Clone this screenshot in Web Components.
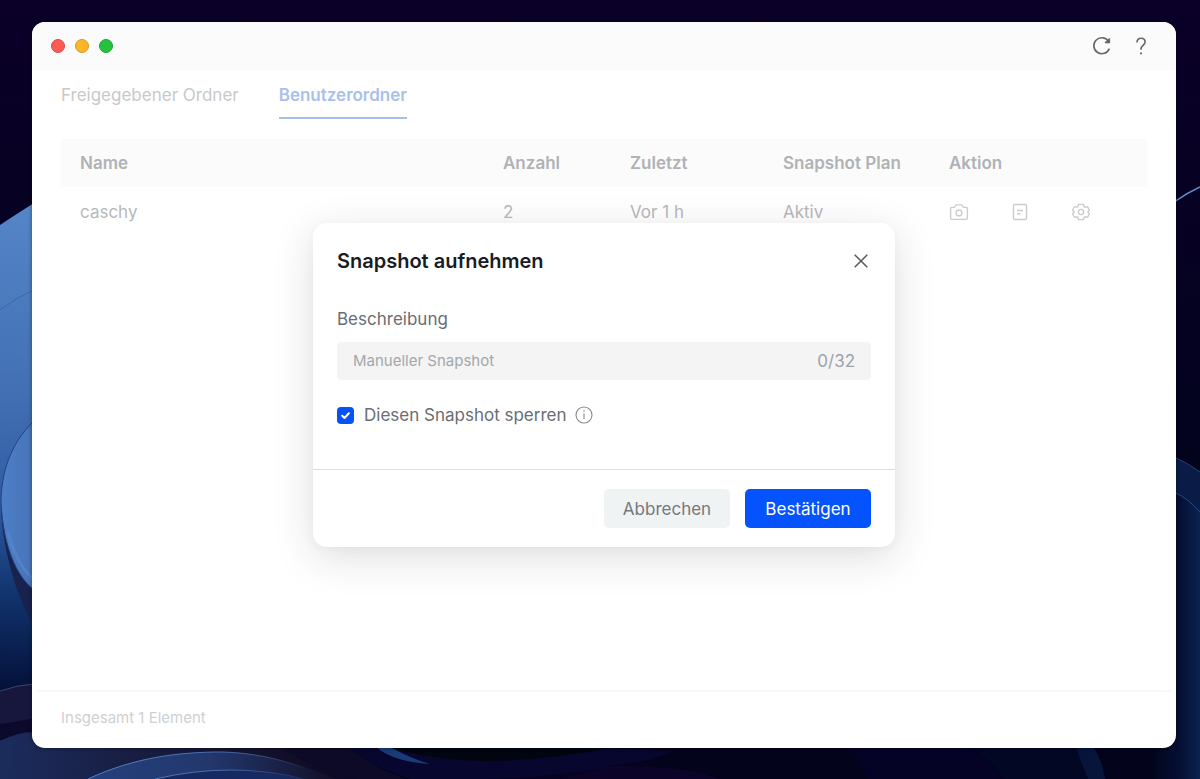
<!DOCTYPE html>
<html lang="de">
<head>
<meta charset="utf-8">
<meta name="viewport" content="width=device-width, initial-scale=1">
<title>Snapshot</title>
<style>
  html, body { margin: 0; background: #080022; }
  body { font-family: Inter, "Liberation Sans", sans-serif; font-size: 17px; line-height: 24px; color: #6a6d72; }
</style>
</head>
<body>
<snap-desktop>
  <app-window>
    <tab-bar slot="tabs"></tab-bar>
    <folder-table></folder-table>
    <span slot="status">Insgesamt 1 Element</span>
    <snapshot-dialog slot="overlay" heading="Snapshot aufnehmen"></snapshot-dialog>
  </app-window>
</snap-desktop>
<script>
const define = (name, html, setup) => customElements.define(name, class extends HTMLElement {
  connectedCallback() {
    if (this.shadowRoot) return;
    const root = this.attachShadow({ mode: 'open' });
    root.innerHTML = html;
    if (setup) setup(root, this);
  }
});

const icons = {
  refresh: '<path d="M18.4 7.200A8 8 0 1 0 19.300 14.600"/><path d="M19.300 4.300v4.100h-4.400"/><path d="M16.600 8.200l2.500-2.300v2.500z" fill="currentColor"/>',
  help: '<path d="M8 8.400c0-2.600 1.700-4.200 4-4.200s4.100 1.500 4.100 3.800c0 3.300-4.100 3.500-4.100 6.900v.8"/><path d="M12 18.400v1.900" stroke-width="1.900"/>',
  camera: '<path d="M4.700 7.400h2.800l1.700-2.500h5.600l1.700 2.500h2.800c.6 0 1.100.5 1.100 1.100v9.800c0 .6-.5 1.100-1.100 1.100H4.700c-.6 0-1.100-.5-1.100-1.100V8.500c0-.6.5-1.100 1.100-1.100z"/><circle cx="12" cy="12.900" r="2.900"/>',
  note: '<rect x="5.500" y="4.500" width="13" height="15" rx="1.400"/><path d="M9 10.500h6M9 13.700h3.500"/>',
  gear: '<path d="M9.800 4.400h4.400l1.300 2.700 3.200-.1 1.700 3-1.600 2 1.600 2-1.700 3-3.200-.1-1.300 2.700H9.800l-1.300-2.700-3.200.1-1.700-3 1.600-2-1.600-2 1.700-3 3.200.1z"/><circle cx="12" cy="12" r="2.600"/>',
  close: '<path d="M5.700 5.700l12.600 12.600M18.300 5.700L5.700 18.300"/>',
  info: '<circle cx="12" cy="12" r="8"/><path d="M12 10.300v6M12 7.300v1.400"/>'
};
define('ui-icon', `
<style>
  :host { display: inline-block; width: 24px; height: 24px; }
  svg { display: block; width: 100%; height: 100%; fill: none; stroke: currentColor; stroke-width: var(--stroke, 1.4); stroke-linejoin: round; }
</style>
<svg viewBox="0 0 24 24" aria-hidden="true"></svg>`, (root, host) => {
  root.querySelector('svg').innerHTML = icons[host.getAttribute('name')];
});

define('snap-desktop', `
<style>
  :host { display: flex; position: relative; isolation: isolate; box-sizing: border-box; min-height: 100vh; padding: 22px 24px 31px 32px; overflow: hidden; }
  .wallpaper { position: absolute; inset: 0; z-index: -1; width: 100%; height: 100%; }
  ::slotted(*) { flex: 1; min-width: 0; }
</style>
<svg class="wallpaper" viewBox="0 0 1200 779" preserveAspectRatio="none" aria-hidden="true">
  <defs>
    <linearGradient id="petal" x1="4" y1="200" x2="0" y2="690" gradientUnits="userSpaceOnUse">
      <stop offset="0" stop-color="#5586c8"/><stop offset=".4" stop-color="#426fb4"/><stop offset=".62" stop-color="#2f5ba2"/><stop offset=".8" stop-color="#12346e"/><stop offset="1" stop-color="#04113a"/>
    </linearGradient>
    <linearGradient id="disc" x1="0" y1="0" x2="34" y2="0" gradientUnits="userSpaceOnUse">
      <stop offset="0" stop-color="#4d7fc8"/><stop offset="1" stop-color="#4773b8"/>
    </linearGradient>
    <linearGradient id="right" x1="1155" y1="0" x2="1204" y2="0" gradientUnits="userSpaceOnUse">
      <stop offset="0" stop-color="#020720"/><stop offset=".5" stop-color="#050f33"/><stop offset="1" stop-color="#0c2658"/>
    </linearGradient>
    <linearGradient id="night" x1="0" y1="0" x2="0" y2="1"><stop offset="0" stop-color="#0b0028"/><stop offset=".55" stop-color="#03031f"/><stop offset="1" stop-color="#03031c"/></linearGradient>
    <linearGradient id="fold" x1="0" y1="0" x2="400" y2="0" gradientUnits="userSpaceOnUse">
      <stop offset="0" stop-color="#1b2c5c"/><stop offset=".35" stop-color="#181d40"/><stop offset=".7" stop-color="#121029"/><stop offset="1" stop-color="#06041f"/>
    </linearGradient>
    <linearGradient id="band" x1="90" y1="0" x2="330" y2="0" gradientUnits="userSpaceOnUse">
      <stop offset="0" stop-color="#24407c"/><stop offset=".5" stop-color="#23376d"/><stop offset="1" stop-color="#121029"/>
    </linearGradient>
    <linearGradient id="rim" x1="90" y1="0" x2="310" y2="0" gradientUnits="userSpaceOnUse">
      <stop offset="0" stop-color="#5580c0"/><stop offset=".6" stop-color="#456eaf"/><stop offset="1" stop-color="#456eaf" stop-opacity="0"/>
    </linearGradient>
  </defs>
  <rect width="1200" height="779" fill="url(#night)"/>
  <path d="M0 225Q18 213 34 203V690H0z" fill="url(#petal)"/>
  <path d="M0 310Q17 297 34 290" fill="none" stroke="#3867ac"/>
  <path d="M1 505C2 550 18 600 34 626V585C16 570 4 540 2 505z" fill="#17224f"/>
  <path d="M34 421C10 443 1 475 1 502C3 545 16 576 34 590z" fill="url(#disc)" stroke="#21437f"/>
  <path d="M8 532C14 556 24 571 34 580" fill="none" stroke="#5b8cd0" stroke-opacity=".5" stroke-width="3"/>
  <path d="M0 691Q17 685 34 684V779H0z" fill="#17173e"/>
  <path d="M0 691Q17 685 34 684" fill="none" stroke="#36466e"/>
  <path d="M0 724Q17 722 34 718V740H0z" fill="#0b0a2c"/>
  <path d="M0 741Q18 732 34 732L60 746H400V779H0z" fill="url(#fold)"/>
  <path d="M88 779C135 757 180 752 222 752C270 753 305 766 335 779z" fill="url(#band)"/>
  <path d="M88 779C135 757 180 752 222 752C260 753 290 762 310 771" fill="none" stroke="url(#rim)"/>
  <path d="M155 779Q232 761 305 779z" fill="#162960"/>
  <path d="M155 779Q232 761 305 779" fill="none" stroke="url(#rim)"/>
  <path d="M282 748Q310 768 355 779H405Q375 768 350 748z" fill="#0c0a26"/>
  <path d="M350 748Q370 765 410 779H700L800 748z" fill="#05031e"/>
  <path d="M350 748H600L690 752Q570 779 480 779H410Q370 765 350 748z" fill="#07062e"/>
  <path d="M377 748Q395 762 430 764Q410 758 392 748z" fill="#1a3b78"/>
  <path d="M392 748Q440 762 500 761Q560 758 610 748z" fill="#020410"/>
  <path d="M600 769Q655 754 720 779H560z" fill="#0b0428"/>
  <path d="M680 748H970Q992 760 1004 779H720Q690 765 600 766Q650 764 680 748z" fill="#04031c"/>
  <path d="M850 748H970Q992 760 1004 779H870z" fill="#06042a" fill-opacity=".7"/>
  <path d="M970 748Q992 760 1004 779H1105Q1103 762 1094 748z" fill="#020724"/>
  <path d="M1076 748H1094Q1103 762 1105 779H1088z" fill="#0a1b46" fill-opacity=".7"/>
  <path d="M1174 202Q1187 193 1200 187" fill="none" stroke="#6190d2" stroke-width="1.500"/>
  <path d="M1174 457Q1188 463 1200 472V520H1174z" fill="#0a1b46"/>
  <path d="M1174 457Q1188 463 1200 472" fill="none" stroke="#203f7b"/>
  <path d="M1174 492Q1189 499 1200 512V779H1155V735H1174z" fill="url(#right)"/>
  <path d="M1174 492Q1189 499 1200 512" fill="none" stroke="#234884"/>
</svg>
<slot></slot>`);

define('app-window', `
<style>
  :host { display: flex; flex-direction: column; position: relative; overflow: hidden; border-radius: 13px; background: #fff; box-shadow: 0 0 4px #0006; }
  header { display: flex; align-items: center; gap: 13px; height: 48px; padding: 0 22px 0 19px; background: #fbfbfc; }
  .lights { display: flex; gap: 10px; margin-right: auto; }
  .lights button { width: 14px; height: 14px; padding: 0; border: 1px solid #d84b43; border-radius: 50%; background: #fc5b54; }
  .lights .min { border-color: #d89a26; background: #fbb62a; }
  .lights .max { border-color: #1fa534; background: #25c23e; }
  .tool { display: grid; width: 26px; padding: 0; border: 0; background: none; color: #66676a; place-items: center; --stroke: 1.6; }
  main { flex: 1; padding: 0 29px; }
  footer { margin: 0 4px; padding: 14px 25px 18px; border-top: 2px solid #f8f8f9; color: #cfd0d2; font-size: 15px; }
  ::slotted([slot=overlay]) { position: absolute; inset: 0; }
</style>
<header>
  <div class="lights">
    <button aria-label="Schließen"></button><button class="min" aria-label="Minimieren"></button><button class="max" aria-label="Maximieren"></button>
  </div>
  <button class="tool" aria-label="Aktualisieren"><ui-icon name="refresh"></ui-icon></button>
  <button class="tool" aria-label="Hilfe"><ui-icon name="help"></ui-icon></button>
</header>
<main><slot name="tabs"></slot><slot></slot></main>
<footer><slot name="status"></slot></footer>
<slot name="overlay"></slot>`);

define('tab-bar', `
<style>
  :host { display: block; margin-bottom: 20px; }
  div { display: flex; gap: 40px; }
  button { padding: 13px 0 10px; border: 0; border-bottom: 2px solid transparent; background: none; color: #c8c9ca; font: inherit; }
  [aria-selected=true] { border-color: #a9bfea; color: #a9c0ee; font-weight: 600; }
</style>
<div role="tablist">
  <button role="tab" aria-selected="false">Freigegebener Ordner</button>
  <button role="tab" aria-selected="true">Benutzerordner</button>
</div>`);

define('folder-table', `
<style>
  :host { display: block; }
  table { width: 100%; table-layout: fixed; border-collapse: collapse; color: #b7b8ba; }
  th, td { padding: 12px 0 12px 19px; text-align: left; white-space: nowrap; }
  th { background: #fbfbfc; color: #b0b2b4; font-weight: 600; }
  td { padding-top: 13px; }
  .count { width: 108px; } .last { width: 134px; } .plan { width: 147px; } .action { width: 198px; }
  td.tools { padding-left: 17px; }
  .actions { display: flex; gap: 37px; }
  .actions button { width: 24px; height: 24px; padding: 0; border: 0; background: none; color: #cbccce; }
</style>
<table>
  <thead><tr><th>Name</th><th class="count">Anzahl</th><th class="last">Zuletzt</th><th class="plan">Snapshot Plan</th><th class="action">Aktion</th></tr></thead>
  <tbody><tr><td>caschy</td><td>2</td><td>Vor 1 h</td><td>Aktiv</td><td class="tools"><div class="actions">
    <button aria-label="Snapshot aufnehmen"><ui-icon name="camera"></ui-icon></button>
    <button aria-label="Snapshot-Liste"><ui-icon name="note"></ui-icon></button>
    <button aria-label="Einstellungen"><ui-icon name="gear"></ui-icon></button>
  </div></td></tr></tbody>
</table>`);

define('snapshot-dialog', `
<style>
  :host { display: grid; place-items: center; }
  section { width: 582px; max-width: 100%; border-radius: 14px; background: #fff; box-shadow: 0 10px 40px #20243026, 0 2px 8px #20243008; }
  header { display: flex; align-items: center; justify-content: space-between; padding: 26px 22px 0 24px; }
  h2 { margin: 0; color: #171c25; font-size: 20px; line-height: 24px; font-weight: 600; }
  .close { display: grid; padding: 0; border: 0; background: none; color: #55585e; --stroke: 1.5; }
  .body { padding: 34px 24px 42px; }
  .label { display: block; margin-bottom: 11px; }
  .field { display: flex; align-items: center; height: 38px; padding: 0 16px; border-radius: 4px; background: #f4f4f4; color: #9ca2a9; }
  .field input { flex: 1; min-width: 0; padding: 0; border: 0; outline: 0; background: none; color: #4b4f55; font: inherit; font-size: 15px; }
  .field input::placeholder { color: #a2a8ae; opacity: 1; }
  .lock { display: flex; align-items: center; margin-top: 23px; }
  .box { display: grid; margin-right: 10px; }
  .box > * { grid-area: 1 / 1; width: 17px; height: 17px; }
  .box input { margin: 0; appearance: none; border-radius: 4px; background: #0552f6; }
  .box svg { fill: none; stroke: #fff; stroke-width: 2; stroke-linecap: round; stroke-linejoin: round; pointer-events: none; }
  .lock ui-icon { margin-left: 5px; color: #85888c; --stroke: 1.1; }
  footer { display: flex; justify-content: flex-end; gap: 15px; padding: 19px 24px; border-top: 1px solid #dedfe1; }
  footer button { width: 126px; height: 39px; padding: 0; border: 0; border-radius: 5px; background: #f0f3f4; color: #74797e; font: inherit; }
  footer .primary { background: #0552ff; color: #fff; }
</style>
<section role="dialog" aria-labelledby="title">
  <header><h2 id="title"></h2><button class="close" aria-label="Schließen"><ui-icon name="close"></ui-icon></button></header>
  <div class="body">
    <label class="label" for="desc">Beschreibung</label>
    <div class="field"><input id="desc" type="text" maxlength="32" placeholder="Manueller Snapshot"><span>0/32</span></div>
    <div class="lock">
      <span class="box"><input id="lock" type="checkbox" checked><svg viewBox="0 0 17 17" aria-hidden="true"><path d="M5.200 8.800l2.300 2.200 4.400-4.700"/></svg></span>
      <label for="lock">Diesen Snapshot sperren</label>
      <ui-icon name="info"></ui-icon>
    </div>
  </div>
  <footer><button>Abbrechen</button><button class="primary">Bestätigen</button></footer>
</section>`, (root, host) => {
  root.querySelector('h2').textContent = host.getAttribute('heading');
  const input = root.querySelector('#desc');
  input.addEventListener('input', () => { input.nextElementSibling.textContent = input.value.length + '/32'; });
});
</script>
</body>
</html>
